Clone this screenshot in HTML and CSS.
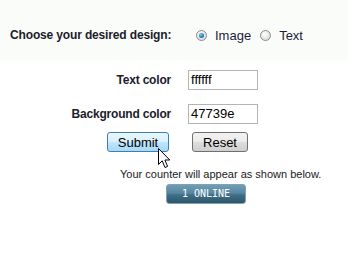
FILE: index.html
```html
<!DOCTYPE html>
<html>
<head>
<meta charset="utf-8">
<link rel="stylesheet" href="styles.css">
</head>
<body>
<div class="top">
  <span class="q">Choose your desired design:</span>
  <label class="opt"><span class="radio on"></span>Image</label>
  <label class="opt"><span class="radio"></span>Text</label>
</div>
<div class="form">
  <div class="row">
    <span class="lbl">Text color</span>
    <span class="inp">ffffff</span>
  </div>
  <div class="row">
    <span class="lbl">Background color</span>
    <span class="inp">47739e</span>
  </div>
  <div class="btns">
    <span class="btn submit">Submit<svg class="cursor" width="14" height="21" viewBox="0 0 14 21"><path d="M0.5 0.5 L0.5 16.5 L4.2 12.8 L7 19.5 L9.6 18.4 L6.9 12 L11.8 12 Z" fill="#fff" stroke="#000" stroke-width="1" stroke-linejoin="miter"/></svg></span>
    <span class="btn reset">Reset</span>
  </div>
  <div class="note">Your counter will appear as shown below.</div>
  <div class="badgewrap"><span class="badge">1 ONLINE</span></div>
</div>
</body>
</html>
```
FILE: styles.css
```css
html, body { margin: 0; padding: 0; background: #fff; }
body { width: 348px; height: 257px; font-family: "Liberation Sans", Arial, sans-serif; color: #1a1a1a; position: relative; overflow: hidden; }
.top { height: 60px; background: #fafcfa; display: flex; align-items: center; padding-left: 10px; padding-top: 10px; box-sizing: border-box; }
.q { font-weight: bold; font-size: 12px; letter-spacing: -0.15px; width: 186px; color: #1c1c2a; }
.opt { display: flex; align-items: center; font-size: 13px; color: #1c1c3a; margin-right: 9px; }
.radio { width: 11px; height: 11px; border-radius: 50%; border: 1px solid #8a8a8a; background: radial-gradient(circle at 40% 35%, #fff 0%, #e4e4e4 60%, #cfcfcf 100%); box-sizing: border-box; margin-right: 8px; position: relative; }
.radio.on::after { content: ""; position: absolute; left: 2px; top: 2px; width: 5px; height: 5px; border-radius: 50%; background: radial-gradient(circle at 40% 35%, #7ed0f5 0%, #1b7fbf 55%, #0b4f86 100%); }
.form { padding-top: 10px; }
.row { display: flex; align-items: center; height: 20px; margin-bottom: 14px; }
.lbl { width: 171px; text-align: right; font-weight: bold; font-size: 12px; letter-spacing: -0.2px; color: #1c1c2a; }
.inp { margin-left: 17px; width: 70px; height: 20px; box-sizing: border-box; border: 1px solid #b4b4b4; font-size: 13px; padding-left: 2px; line-height: 18px; color: #000; }
.btns { display: flex; margin-top: -6px; padding-left: 107px; }
.btn { box-sizing: border-box; height: 20px; border-radius: 3px; font-size: 13px; display: flex; align-items: center; justify-content: center; color: #000; }
.submit { width: 62px; border: 1px solid #3c7fb1; background: linear-gradient(#eaf6fd 0%, #d9f0fc 50%, #bee6fd 51%, #a7d9f5 100%); position: relative; }
.reset { width: 56px; margin-left: 23px; border: 1px solid #707070; background: linear-gradient(#f2f2f2 0%, #ebebeb 50%, #dddddd 51%, #cfcfcf 100%); }
.cursor { position: absolute; left: 50px; top: 15px; }
.note { font-size: 11px; padding-left: 120px; margin-top: 16px; color: #1a1a1a; }
.badgewrap { padding-left: 166px; margin-top: 3px; }
.badge { display: inline-flex; align-items: center; justify-content: center; width: 80px; height: 20px; box-sizing: border-box; border-radius: 3px; border: 1px solid #7fa3b5; background: linear-gradient(#6f9db4 0%, #5787a0 45%, #3f6e86 55%, #2d566b 100%); color: #fff; font-family: "DejaVu Sans Mono", monospace; font-size: 10px; }
```
